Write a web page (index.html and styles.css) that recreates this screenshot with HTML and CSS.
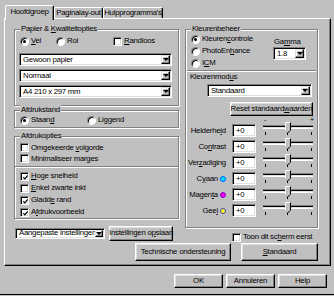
FILE: index.html
```html
<!DOCTYPE html>
<html lang="nl">
<head>
    <meta charset="UTF-8">
    <title>Printereigenschappen</title>
    <link rel="stylesheet" href="styles.css">
</head>
<body>
<div class="window">
    <div class="tabs">
        <div class="tab active">Hoofdgroep</div>
        <div class="tab tab-layout">Paginalay-out</div>
        <div class="tab tab-tools">Hulpprogramma's</div>
    </div>

    <div class="panel">
        <div class="columns">
            <div class="col-left">
                <div class="group g-paper">
                    <span class="legend">Papier &amp; <u>K</u>waliteitopties</span>
                    <div class="opt-row">
                        <div class="opt opt-vel"><span class="radio on"></span><span><u>V</u>el</span></div>
                        <div class="opt opt-rol"><span class="radio"></span><span>Rol</span></div>
                        <div class="opt"><span class="check"></span><span><u>R</u>andloos</span></div>
                    </div>
                    <div class="select sel-paper first"><span class="sel-text">Gewoon papier</span><span class="drop"></span></div>
                    <div class="select sel-paper"><span class="sel-text">Normaal</span><span class="drop"></span></div>
                    <div class="select sel-paper"><span class="sel-text">A4 210 x 297 mm</span><span class="drop"></span></div>
                </div>

                <div class="group g-orient">
                    <span class="legend">Afdrukstand</span>
                    <div class="opt-row">
                        <div class="opt opt-staand"><span class="radio on"></span><span>Staan<u>d</u></span></div>
                        <div class="opt"><span class="radio"></span><span>Liggend</span></div>
                    </div>
                </div>

                <div class="group g-options">
                    <span class="legend">Afdrukopties</span>
                    <div class="opt check-row"><span class="check"></span><span>Omgekeerde <u>v</u>olgorde</span></div>
                    <div class="opt check-row"><span class="check"></span><span>Minimaliseer marges</span></div>
                    <div class="sep"></div>
                    <div class="opt check-row tall"><span class="check on"><svg width="5" height="5" viewBox="0 0 5 5"><path d="M0.3 2.2l1.5 1.6l2.9-3.4" fill="none" stroke="#000" stroke-width="1.2"/></svg></span><span><u>H</u>oge snelheid</span></div>
                    <div class="opt check-row tall"><span class="check"></span><span><u>E</u>nkel zwarte inkt</span></div>
                    <div class="opt check-row tall"><span class="check on"><svg width="5" height="5" viewBox="0 0 5 5"><path d="M0.3 2.2l1.5 1.6l2.9-3.4" fill="none" stroke="#000" stroke-width="1.2"/></svg></span><span>Gladd<u>e</u> rand</span></div>
                    <div class="opt check-row tall"><span class="check on"><svg width="5" height="5" viewBox="0 0 5 5"><path d="M0.3 2.2l1.5 1.6l2.9-3.4" fill="none" stroke="#000" stroke-width="1.2"/></svg></span><span>A<u>f</u>drukvoorbeeld</span></div>
                </div>

                <div class="save-row">
                    <div class="select sel-custom"><span class="sel-text">Aangepaste instellingen</span><span class="drop"></span></div>
                    <button class="btn btn-save">Instellingen o<u>p</u>slaan</button>
                </div>
            </div>

            <div class="col-right">
                <div class="group g-color">
                    <span class="legend">Kleurenbeheer</span>
                    <div class="color-top">
                        <div class="radio-list">
                            <div class="opt color-opt"><span class="radio on"></span><span>Kleuren<u>c</u>ontrole</span></div>
                            <div class="opt color-opt"><span class="radio"></span><span>PhotoEn<u>h</u>ance</span></div>
                            <div class="opt color-opt"><span class="radio"></span><span>I<u>C</u>M</span></div>
                        </div>
                        <div class="gamma">
                            <div class="gamma-label">Ga<u>m</u>ma</div>
                            <div class="select sel-gamma"><span class="sel-text">1.8</span><span class="drop"></span></div>
                        </div>
                    </div>
                    <div class="sep"></div>
                    <div class="mode-label">Kleurenmod<u>u</u>s</div>
                    <div class="select sel-mode"><span class="sel-text">Standaard</span><span class="drop"></span></div>
                    <button class="btn btn-reset">Reset standaard<u>w</u>aarden</button>
                    <div class="scale"><span>-</span><span>+</span></div>

                    <div class="slider-row">
                        <div class="s-label"><span>Helderhe<u>i</u>d</span></div>
                        <div class="field s-input">+0</div>
                        <svg class="slider" width="50" height="16" viewBox="0 0 50 16"><rect y="3" width="50" height="1" fill="#808080"/><rect y="4" width="50" height="1" fill="#000"/><rect y="5" width="50" height="1" fill="#dfdfdf"/><rect y="6" width="50" height="1" fill="#fff"/><path d="M2.5 10v3M24.5 10v3M48.5 10v3" stroke="#000"/><path d="M22 0h6v8l-3 3l-3-3z" fill="#c0c0c0"/><path d="M22.5 8V0.5h5" fill="none" stroke="#fff"/><path d="M27.5 0.5v7.7l-3 3" fill="none" stroke="#000"/></svg>
                    </div>
                    <div class="slider-row">
                        <div class="s-label"><span>Co<u>n</u>trast</span></div>
                        <div class="field s-input">+0</div>
                        <svg class="slider" width="50" height="16" viewBox="0 0 50 16"><rect y="3" width="50" height="1" fill="#808080"/><rect y="4" width="50" height="1" fill="#000"/><rect y="5" width="50" height="1" fill="#dfdfdf"/><rect y="6" width="50" height="1" fill="#fff"/><path d="M2.5 10v3M24.5 10v3M48.5 10v3" stroke="#000"/><path d="M22 0h6v8l-3 3l-3-3z" fill="#c0c0c0"/><path d="M22.5 8V0.5h5" fill="none" stroke="#fff"/><path d="M27.5 0.5v7.7l-3 3" fill="none" stroke="#000"/></svg>
                    </div>
                    <div class="slider-row">
                        <div class="s-label"><span>Ver<u>z</u>adiging</span></div>
                        <div class="field s-input">+0</div>
                        <svg class="slider" width="50" height="16" viewBox="0 0 50 16"><rect y="3" width="50" height="1" fill="#808080"/><rect y="4" width="50" height="1" fill="#000"/><rect y="5" width="50" height="1" fill="#dfdfdf"/><rect y="6" width="50" height="1" fill="#fff"/><path d="M2.5 10v3M24.5 10v3M48.5 10v3" stroke="#000"/><path d="M22 0h6v8l-3 3l-3-3z" fill="#c0c0c0"/><path d="M22.5 8V0.5h5" fill="none" stroke="#fff"/><path d="M27.5 0.5v7.7l-3 3" fill="none" stroke="#000"/></svg>
                    </div>
                    <div class="slider-row">
                        <div class="s-label"><span>C<u>y</u>aan</span><span class="dot dot-cyan"></span></div>
                        <div class="field s-input">+0</div>
                        <svg class="slider" width="50" height="16" viewBox="0 0 50 16"><rect y="3" width="50" height="1" fill="#808080"/><rect y="4" width="50" height="1" fill="#000"/><rect y="5" width="50" height="1" fill="#dfdfdf"/><rect y="6" width="50" height="1" fill="#fff"/><path d="M2.5 10v3M24.5 10v3M48.5 10v3" stroke="#000"/><path d="M22 0h6v8l-3 3l-3-3z" fill="#c0c0c0"/><path d="M22.5 8V0.5h5" fill="none" stroke="#fff"/><path d="M27.5 0.5v7.7l-3 3" fill="none" stroke="#000"/></svg>
                    </div>
                    <div class="slider-row">
                        <div class="s-label"><span>Magen<u>t</u>a</span><span class="dot dot-magenta"></span></div>
                        <div class="field s-input">+0</div>
                        <svg class="slider" width="50" height="16" viewBox="0 0 50 16"><rect y="3" width="50" height="1" fill="#808080"/><rect y="4" width="50" height="1" fill="#000"/><rect y="5" width="50" height="1" fill="#dfdfdf"/><rect y="6" width="50" height="1" fill="#fff"/><path d="M2.5 10v3M24.5 10v3M48.5 10v3" stroke="#000"/><path d="M22 0h6v8l-3 3l-3-3z" fill="#c0c0c0"/><path d="M22.5 8V0.5h5" fill="none" stroke="#fff"/><path d="M27.5 0.5v7.7l-3 3" fill="none" stroke="#000"/></svg>
                    </div>
                    <div class="slider-row">
                        <div class="s-label"><span>Gee<u>l</u></span><span class="dot dot-yellow"></span></div>
                        <div class="field s-input">+0</div>
                        <svg class="slider" width="50" height="16" viewBox="0 0 50 16"><rect y="3" width="50" height="1" fill="#808080"/><rect y="4" width="50" height="1" fill="#000"/><rect y="5" width="50" height="1" fill="#dfdfdf"/><rect y="6" width="50" height="1" fill="#fff"/><path d="M2.5 10v3M24.5 10v3M48.5 10v3" stroke="#000"/><path d="M22 0h6v8l-3 3l-3-3z" fill="#c0c0c0"/><path d="M22.5 8V0.5h5" fill="none" stroke="#fff"/><path d="M27.5 0.5v7.7l-3 3" fill="none" stroke="#000"/></svg>
                    </div>
                </div>

                <div class="opt toon-row"><span class="check"></span><span>Toon dit sc<u>h</u>erm eerst</span></div>
            </div>
        </div>

        <div class="panel-buttons">
            <button class="btn btn-support">Technische ondersteuning</button>
            <button class="btn btn-default"><u>S</u>tandaard</button>
        </div>
    </div>

    <div class="dlg-buttons">
        <button class="btn btn-dlg">OK</button>
        <button class="btn btn-dlg">Annuleren</button>
        <button class="btn btn-dlg">Help</button>
    </div>
</div>
</body>
</html>
```

FILE: styles.css
```css
body { margin: 0; background: #c0c0c0; font-family: "Liberation Sans", Arial, sans-serif; font-size: 7.8px; letter-spacing: -0.25px; line-height: 10px; color: #000; }
u { text-decoration: underline; text-underline-offset: 1px; }

.window { width: 334px; height: 295px; box-sizing: border-box; padding: 5px 0 0 4px; border-bottom: 1px solid #000; }

/* tabs */
.tabs { display: flex; height: 13px; margin-left: 1px; }
.tab { box-sizing: border-box; height: 11px; margin-top: 2px; border: 1px solid #fff; border-right-color: #000; border-bottom: none; border-radius: 2px 2px 0 0; box-shadow: inset -1px 0 0 #808080; text-align: center; line-height: 10px; }
.tab.active { position: relative; z-index: 1; width: 49px; height: 15px; margin-top: 0; padding-top: 1px; background: #c0c0c0; }
.tab-layout { width: 49px; }
.tab-tools { width: 60px; }

.panel { width: 327px; height: 248px; box-sizing: border-box; padding: 10px 12px 0 9px; border: 1px solid; border-color: #fff #000 #000 #fff; box-shadow: inset -1px -1px 0 #808080; }
.columns { display: flex; gap: 6px; height: 214px; }
.col-left { width: 166px; }
.col-right { width: 134px; }

/* etched group box */
.group { position: relative; box-sizing: border-box; border: 1px solid #808080; box-shadow: 1px 1px 0 #fff, inset 1px 1px 0 #fff; }
.legend { position: absolute; top: -6px; left: 5px; padding: 0 1px; background: #c0c0c0; line-height: 10px; white-space: nowrap; }
.sep { height: 0; border-top: 1px solid #808080; border-bottom: 1px solid #fff; }

.opt { display: flex; align-items: center; gap: 2px; white-space: nowrap; }
.opt-row { display: flex; height: 10px; align-items: center; }

.radio { box-sizing: border-box; width: 9px; height: 9px; flex: none; display: flex; align-items: center; justify-content: center; border-radius: 50%; background: #fff; border: 1px solid; border-color: #808080 #fff #fff #808080; box-shadow: inset 1px 1px 0 #000; }
.radio.on::after { content: ""; width: 3px; height: 3px; border-radius: 50%; background: #000; }
.check { box-sizing: border-box; width: 9px; height: 9px; flex: none; padding: 1px; background: #fff; border: 1px solid; border-color: #808080 #fff #fff #808080; box-shadow: inset 1px 1px 0 #000, inset -1px -1px 0 #dfdfdf; }
.check svg { display: block; margin: 1px 0 0 1px; }

/* sunken fields and drop-down boxes */
.field, .select { box-sizing: border-box; background: #fff; border: 1px solid; border-color: #808080 #fff #fff #808080; box-shadow: inset 1px 1px 0 #000, inset -1px -1px 0 #dfdfdf; }
.select { display: flex; align-items: center; padding: 1px; }
.sel-text { flex: 1; padding-left: 2px; white-space: nowrap; overflow: hidden; }
.drop { box-sizing: border-box; width: 9px; height: 100%; display: flex; align-items: center; justify-content: center; background: #c0c0c0; border: 1px solid; border-color: #dfdfdf #000 #000 #dfdfdf; box-shadow: inset -1px -1px 0 #808080, inset 1px 1px 0 #fff; }
.drop::after { content: ""; border-left: 3px solid transparent; border-right: 3px solid transparent; border-top: 3px solid #000; }

.btn { box-sizing: border-box; display: flex; align-items: center; justify-content: center; padding: 0; background: #c0c0c0; color: #000; font: inherit; letter-spacing: inherit; line-height: 10px; white-space: nowrap; border: 1px solid; border-color: #fff #000 #000 #fff; box-shadow: inset -1px -1px 0 #808080, inset 1px 1px 0 #dfdfdf; }

/* left column */
.g-paper { height: 77px; padding: 6px 0 0 4px; }
.g-paper .opt-row { margin-left: 1px; }
.opt-vel { width: 36px; }
.opt-rol { width: 57px; }
.sel-paper { width: 153px; height: 13px; margin-top: 3px; }
.sel-paper.first { margin-top: 7px; }

.g-orient { height: 18px; margin-top: 4px; padding: 4px 0 0 5px; }
.opt-staand { width: 67px; }

.g-options { height: 83px; margin-top: 8px; padding: 5px 0 0 5px; }
.g-options .sep { margin: 2px 0 2px -5px; }
.check-row { height: 11px; }
.check-row.tall { height: 12px; }

.save-row { display: flex; align-items: center; height: 16px; margin-top: 6px; }
.sel-custom { width: 90px; height: 11px; margin-left: 1px; }
.sel-custom .drop { width: 8px; }
.btn-save { width: 64px; height: 15px; margin-left: 4px; }

/* right column */
.g-color { height: 199px; padding-top: 3px; }
.color-top { display: flex; height: 36px; }
.radio-list { padding-left: 5px; }
.color-opt { height: 12px; }
.gamma { margin: 4px 11px 0 auto; }
.gamma-label { padding-left: 1px; }
.sel-gamma { width: 33px; height: 13px; }
.g-color .sep { margin: 1px 1px 0; }
.mode-label { padding-left: 4px; }
.sel-mode { width: 105px; height: 13px; margin: 2px 0 0 21px; }
.btn-reset { width: 83px; height: 14px; margin: 5px 0 0 44px; }
.scale { display: flex; justify-content: space-between; width: 50px; height: 8px; padding: 0 1px 0 78px; font-size: 7px; line-height: 7px; }

.slider-row { display: flex; align-items: flex-start; height: 16px; }
.s-label { display: flex; align-items: center; justify-content: flex-end; width: 40px; height: 13px; white-space: nowrap; }
.s-input { width: 24px; height: 13px; margin-left: 6px; padding: 1px 0 0 3px; line-height: 10px; }
.slider { display: block; margin: -2px 0 0 7px; }
.dot { box-sizing: border-box; width: 6px; height: 6px; margin-left: 2px; border-radius: 50%; border: 1px solid; }
.dot-cyan { background: #00e0ff; border-color: #0060ff; }
.dot-magenta { background: #ff00ff; border-color: #8000c0; }
.dot-yellow { background: #ffff00; border-color: #4040c0; }

.toon-row { height: 10px; margin-top: 4px; padding-left: 47px; }

.panel-buttons { display: flex; justify-content: flex-end; gap: 10px; }
.btn-support { width: 96px; height: 18px; }
.btn-default { width: 77px; height: 18px; }

.dlg-buttons { display: flex; justify-content: flex-end; gap: 3px; margin-top: 8px; padding-right: 7px; }
.btn-dlg { width: 49px; height: 14px; }
```
